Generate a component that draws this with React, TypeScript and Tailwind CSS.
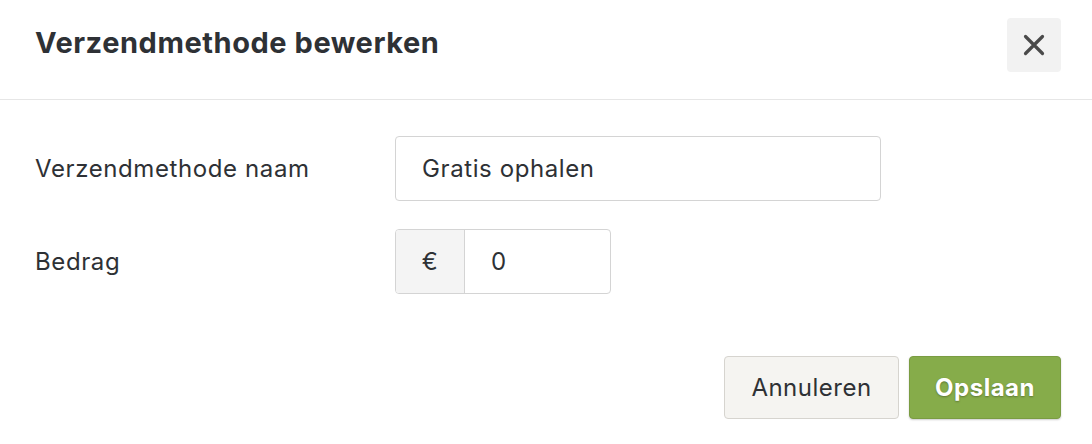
import React from 'react'

const font = { fontFamily: 'Inter, "Noto Sans", sans-serif' }

export default function App() {
  return (
    <div className="w-[1092px] h-[444px] bg-white text-[#2e3135]" style={font}>
      {/* Header */}
      <div className="h-[100px] flex items-start justify-between border-b border-[#e6e6e6] pl-[35px] pr-[31px]">
        <h1 className="mt-[24px] text-[29px] leading-[38px] font-bold tracking-[0.55px]">Verzendmethode bewerken</h1>
        <button className="mt-[18px] w-[54px] h-[54px] rounded-[4px] bg-[#f2f2f2] flex items-center justify-center">
          <svg width="24" height="24" viewBox="0 0 24 24" fill="none" stroke="#4a4a4a" strokeWidth="3.2" strokeLinecap="round">
            <path d="M3.5 3.5 L20.5 20.5 M20.5 3.5 L3.5 20.5" />
          </svg>
        </button>
      </div>

      {/* Body */}
      <div className="pl-[35px] pr-[31px] pt-[36px] flex flex-col gap-[28px] text-[24px] tracking-[0.6px]">
        <div className="flex items-center">
          <label className="w-[360px]">Verzendmethode naam</label>
          <div className="w-[486px] h-[65px] border border-[#d4d4d4] rounded-[4px] flex items-center pl-[26px]">
            Gratis ophalen
          </div>
        </div>
        <div className="flex items-center">
          <label className="w-[360px]">Bedrag</label>
          <div className="w-[216px] h-[65px] border border-[#d4d4d4] rounded-[4px] flex overflow-hidden">
            <div className="w-[69px] bg-[#f4f4f4] border-r border-[#d4d4d4] flex items-center justify-center">€</div>
            <div className="flex-1 flex items-center pl-[26px]">0</div>
          </div>
        </div>
      </div>

      {/* Footer */}
      <div className="pr-[31px] pt-[62px] flex justify-end gap-[10px] text-[24px] tracking-[0.5px]">
        <button className="w-[175px] h-[63px] rounded-[4px] bg-[#f5f4f1] border border-[#d6d4cf] text-[#2e3135]">
          Annuleren
        </button>
        <button className="w-[152px] h-[63px] rounded-[4px] bg-[#86ac4a] border border-[#7a9c42] font-bold text-white shadow-[0_1px_2px_rgba(0,0,0,0.2)] [text-shadow:0_1px_2px_rgba(0,0,0,0.3)]">
          Opslaan
        </button>
      </div>
    </div>
  )
}
